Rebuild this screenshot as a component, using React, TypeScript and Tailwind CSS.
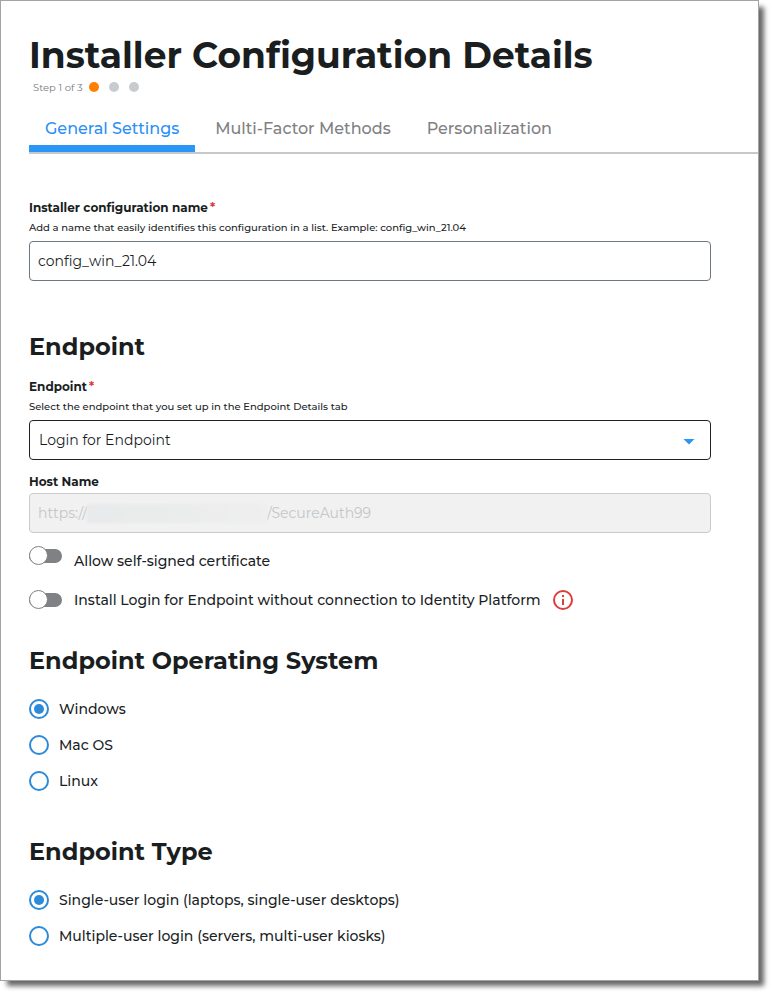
import { useState } from 'react'
import type { ReactNode } from 'react'

const TABS = ['General Settings', 'Multi-Factor Methods', 'Personalization']

const OPERATING_SYSTEMS = ['Windows', 'Mac OS', 'Linux']

const ENDPOINT_TYPES = [
  'Single-user login (laptops, single-user desktops)',
  'Multiple-user login (servers, multi-user kiosks)',
]

function FieldLabel({ id, required, children }: { id: string; required?: boolean; children: ReactNode }) {
  return (
    <label htmlFor={id} className="block text-xs leading-5 font-bold">
      {children}
      {required && <span className="text-[#e03c3c] ml-0.5">*</span>}
    </label>
  )
}

function Toggle({ id, label, className, children }: {
  id: string
  label: string
  className: string
  children?: ReactNode
}) {
  const [on, setOn] = useState(false)
  return (
    <div className={`flex ${className}`}>
      <input
        id={id}
        type="checkbox"
        role="switch"
        checked={on}
        onChange={() => setOn(!on)}
        className="relative self-start appearance-none w-[33px] h-5 shrink-0 before:absolute before:inset-x-0 before:inset-y-[3px] before:rounded-full before:bg-[#808184] after:absolute after:left-0 after:top-0 after:size-[19px] after:rounded-full after:border after:border-[#808184] after:bg-white checked:before:bg-[#2d8ad8] checked:after:left-[14px]"
      />
      <label htmlFor={id} className="ml-3 text-sm leading-5 font-medium">{label}</label>
      {children}
    </div>
  )
}

function RadioGroup({ name, title, options }: { name: string; title: string; options: string[] }) {
  const [value, setValue] = useState(options[0])
  return (
    <div role="radiogroup" aria-label={title} className="mt-[22px] space-y-4">
      {options.map((option) => (
        <label key={option} className="flex items-center gap-2.5 text-sm leading-5 font-medium">
          <input
            type="radio"
            name={name}
            checked={value === option}
            onChange={() => setValue(option)}
            className="appearance-none size-5 shrink-0 rounded-full border-2 border-[#2d8ad8] grid place-items-center before:size-2.5 before:rounded-full checked:before:bg-[#2d8ad8]"
          />
          {option}
        </label>
      ))}
    </div>
  )
}

export default function App() {
  const [tab, setTab] = useState(TABS[0])
  const [name, setName] = useState('config_win_21.04')

  return (
    <div className="bg-white pr-[15px] pb-[15px] font-['Montserrat','Inter',sans-serif] text-[#1a1e1f]">
      <main className="bg-white border border-[#a3a3a3] pl-7 pb-[34px] shadow-[6px_6px_5px_-1px_rgba(0,0,0,0.6)]">
        <h1 className="pt-8 text-4xl leading-[44px] font-bold">Installer Configuration Details</h1>

        {/* Step progress */}
        <div className="flex items-center h-5 pl-1 gap-2.5">
          <span className="text-[10px] text-[#77797c] -mr-1">Step 1 of 3</span>
          <span className="size-2.5 rounded-full bg-[#ff7f00]" />
          <span className="size-2.5 rounded-full bg-[#c8cccf]" />
          <span className="size-2.5 rounded-full bg-[#c8cccf]" />
        </div>

        {/* Tabs */}
        <div role="tablist" className="flex gap-1 mt-3.5 border-b-2 border-[#c5c9cc]">
          {TABS.map((t) => (
            <button
              key={t}
              role="tab"
              aria-selected={tab === t}
              onClick={() => setTab(t)}
              className={`px-4 pt-1.5 pb-1 text-base font-medium border-b-[7px] ${
                tab === t ? 'text-[#2b90f5] border-[#2b96f5]' : 'text-[#808184] border-transparent'
              }`}
            >
              {t}
            </button>
          ))}
        </div>

        <form className="pr-[47px]" onSubmit={(e) => e.preventDefault()}>
          <div className="mt-11">
            <FieldLabel id="config-name" required>Installer configuration name</FieldLabel>
            <p className="text-[10px] leading-5 font-medium">
              Add a name that easily identifies this configuration in a list. Example: config_win_21.04
            </p>
            <input
              id="config-name"
              value={name}
              onChange={(e) => setName(e.target.value)}
              className="mt-[3px] w-full h-10 px-2 rounded border border-[#6d7880] text-sm"
            />
          </div>

          <h2 className="mt-[50px] text-2xl font-bold">Endpoint</h2>
          <div className="mt-3.5">
            <FieldLabel id="endpoint" required>Endpoint</FieldLabel>
            <p className="text-[10px] leading-5 font-medium">
              Select the endpoint that you set up in the Endpoint Details tab
            </p>
            <div className="relative mt-[3px]">
              <select
                id="endpoint"
                className="appearance-none w-full h-10 pl-[9px] pr-10 rounded border border-[#1f2224] bg-white text-sm"
              >
                <option>Login for Endpoint</option>
              </select>
              <svg width="12" height="6" viewBox="0 0 12 6" className="absolute right-4 top-[19px] pointer-events-none">
                <path d="M0.5 0h11L6 5.6z" fill="#2b96f5" />
              </svg>
            </div>
          </div>

          <div className="mt-3">
            <FieldLabel id="host-name">Host Name</FieldLabel>
            <div className="mt-px flex items-center h-10 px-2 rounded border border-[#c8cccc] bg-[#f1f1f1] text-sm text-[#c3c7c9]">
              <input id="host-name" disabled value="https://" className="w-[49px] shrink-0" />
              <span className="w-[180px] h-[19px] shrink-0 bg-linear-to-r from-[#e9eaeb] via-[#ebecec] to-[#efefef] blur-[1px]" />
              <input aria-label="Host path" disabled value="/SecureAuth99" className="flex-1 min-w-0" />
            </div>
          </div>

          <div className="mt-[13px] space-y-[19px]">
            <Toggle id="self-signed" label="Allow self-signed certificate" className="items-end h-[25px]" />
            <Toggle
              id="offline-install"
              label="Install Login for Endpoint without connection to Identity Platform"
              className="items-center h-5"
            >
              <svg width="20" height="20" viewBox="0 0 20 20" fill="none" className="ml-3 shrink-0">
                <circle cx="10" cy="10" r="9" stroke="#e03c3c" strokeWidth="2" />
                <path d="M9 5h2v2H9zM9 9h2v6H9z" fill="#e03c3c" />
              </svg>
            </Toggle>
          </div>

          <h2 className="mt-[35px] text-2xl font-bold">Endpoint Operating System</h2>
          <RadioGroup name="os" title="Endpoint Operating System" options={OPERATING_SYSTEMS} />

          <h2 className="mt-[45px] text-2xl font-bold">Endpoint Type</h2>
          <RadioGroup name="type" title="Endpoint Type" options={ENDPOINT_TYPES} />
        </form>
      </main>
    </div>
  )
}
